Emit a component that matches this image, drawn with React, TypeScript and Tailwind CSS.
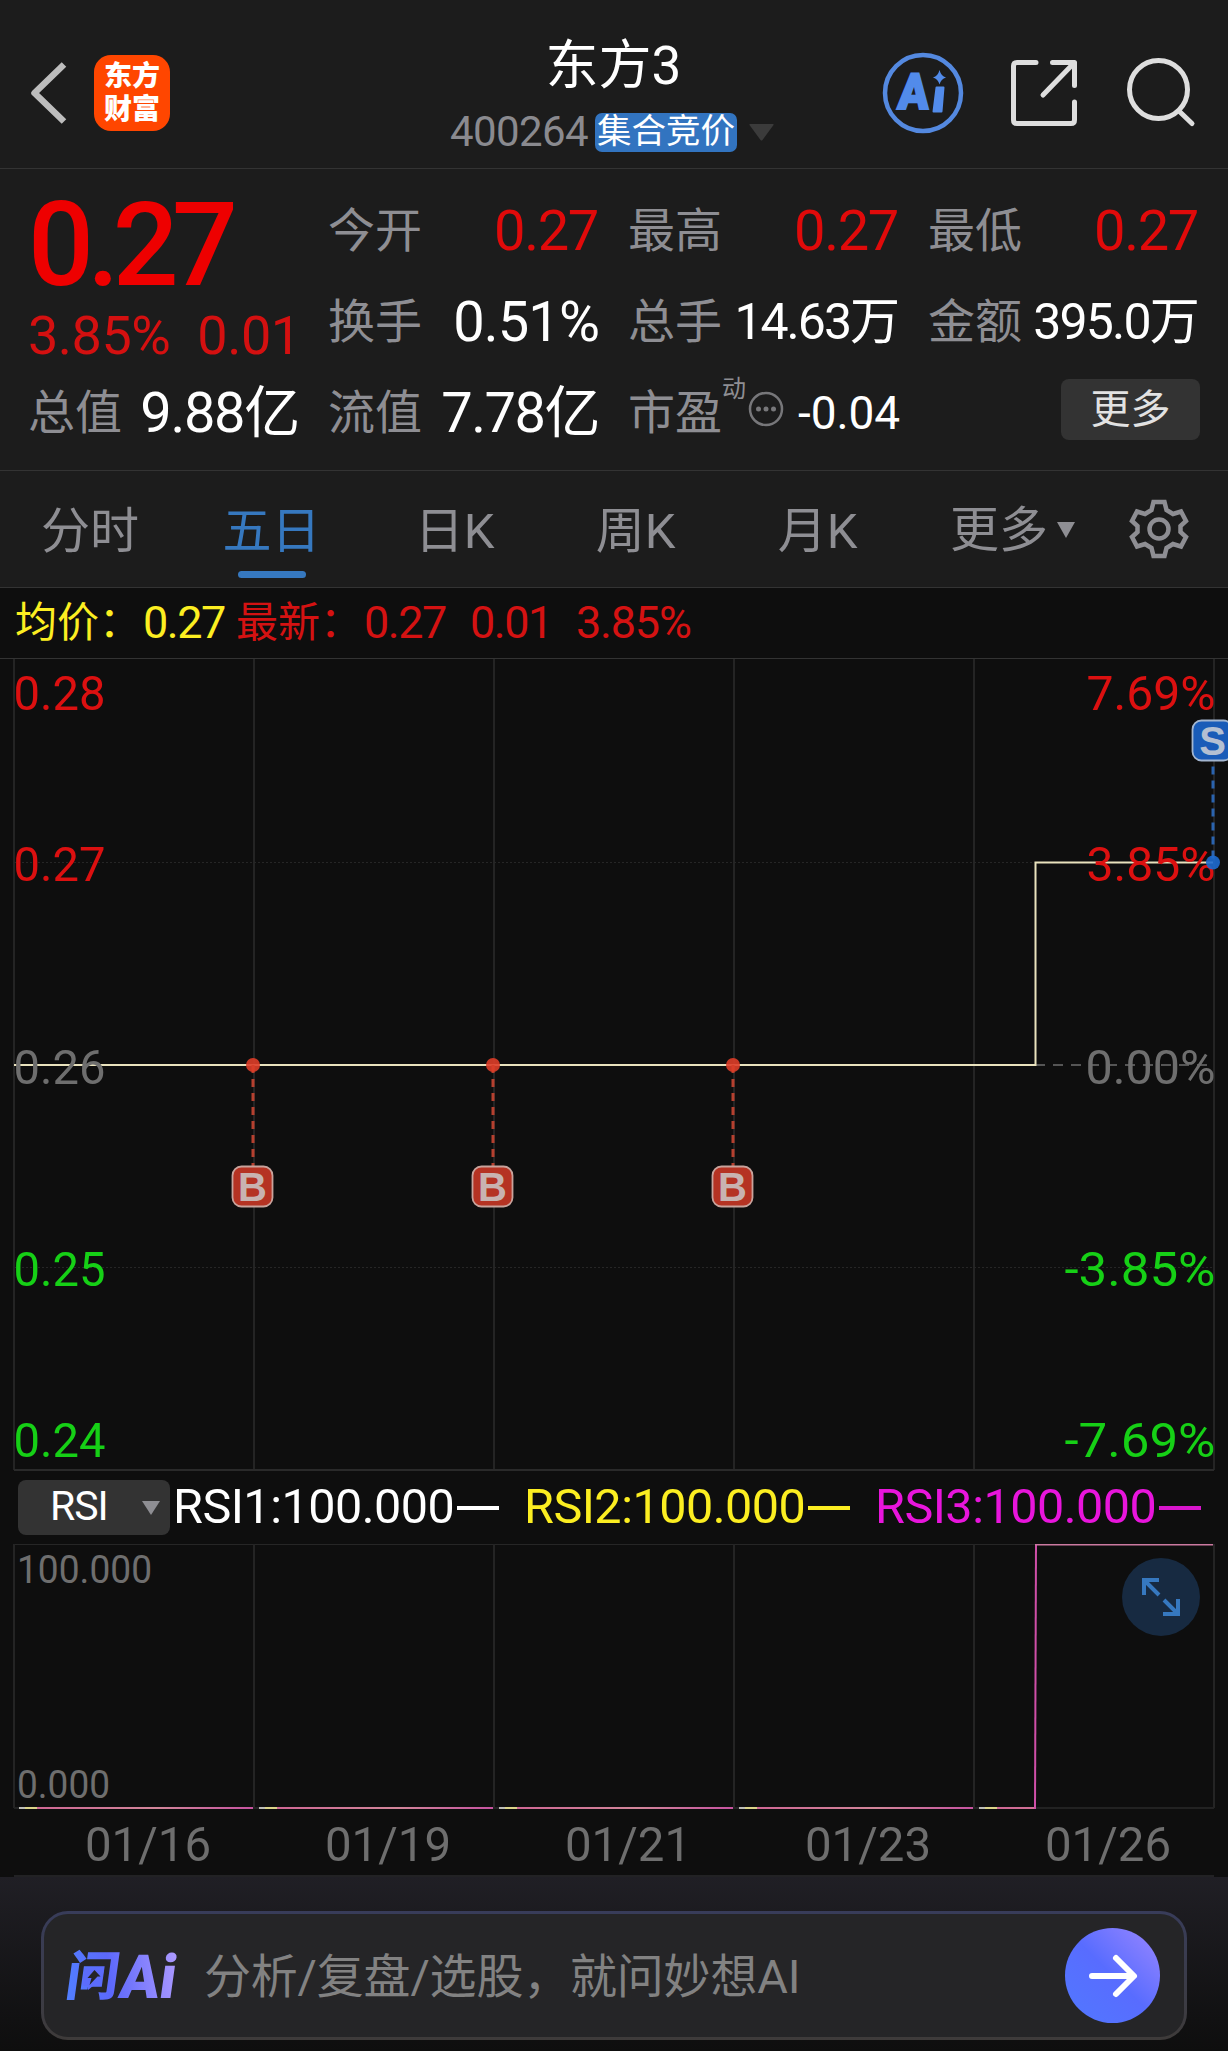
import type { ReactNode } from "react";
import clsx from "clsx";

const FONT = "font-[Roboto,'Noto_Sans_CJK_SC',sans-serif]";

const DATES = ["01/16", "01/19", "01/21", "01/23", "01/26"];
const GRID_X = [14, 254, 494, 734, 974, 1214];

const TABS = [
  { label: "分时", width: "w-[180px]" },
  { label: "五日", width: "w-[183px]", active: true },
  { label: "日K", width: "w-[183px]" },
  { label: "周K", width: "w-[179px]" },
  { label: "月K", width: "w-[185px]" },
];

const PRICE_LABELS = [
  { y: 52, price: "0.28", percent: "7.69%", color: "#dc1010", width: 129 },
  { y: 223, price: "0.27", percent: "3.85%", color: "#dc1010", width: 129 },
  { y: 425.5, price: "0.26", percent: "0.00%", color: "#6e6e6e", width: 130 },
  { y: 628, price: "0.25", percent: "-3.85%", color: "#16d016", width: 151 },
  { y: 799, price: "0.24", percent: "-7.69%", color: "#16d016", width: 151 },
];

const RSI_ITEMS = [
  { label: "RSI1:100.000", color: "text-white", line: "bg-white" },
  { label: "RSI2:100.000", color: "text-[#fcee21]", line: "bg-[#fcee21]" },
  { label: "RSI3:100.000", color: "text-[#e815dc]", line: "bg-[#d815cc]" },
];

export default function App() {
  return (
    <main className={clsx("w-[1228px] h-[2051px] overflow-hidden flex flex-col bg-[#0e0e0e] text-white", FONT)}>
      <Header />
      <QuotePanel />
      <PeriodTabs />
      <LatestBar />
      <PriceChart />
      <RsiBar />
      <RsiChart />
      <AskBar />
    </main>
  );
}

function Header() {
  return (
    <header className="h-[169px] shrink-0 bg-[#1c1c1c] border-b border-[#333] flex items-start justify-between pl-[30px] pr-[31px]">
      <div className="w-[380px] flex items-center pt-[55px]">
        <svg width="38" height="76" viewBox="0 0 38 76" fill="none" stroke="#bdbdbd" strokeWidth="6.500">
          <path d="M34 9.500 4.500 38 34 66.500" strokeLinejoin="round" />
        </svg>
        <div className="ml-[26px] size-[76px] rounded-[17px] bg-[#ff4600] flex flex-col items-center justify-center text-[28px] leading-[33px] font-black">
          <span>东方</span>
          <span>财富</span>
        </div>
      </div>
      <div className="flex flex-col items-center">
        <h1 className="mt-[34px] h-[70px] leading-[65px] text-[53px]">东方3</h1>
        <div className="mt-[7px] mr-[3px] flex items-center">
          <span className="text-[42px] leading-[42px] tracking-[-0.6px] text-[#8a8a8f]">400264</span>
          <span className="ml-[7px] w-[142px] h-[39px] rounded-[7px] bg-[#3274c0] text-[34.5px] leading-[37px] text-center">集合竞价</span>
          <svg className="ml-[12px]" width="25" height="17" viewBox="0 0 25 17" fill="#3b3b3b">
            <path d="M1 0h23q1 0 .5 1L13.500 16q-1 1-2 0L.5 1Q0 0 1 0Z" />
          </svg>
        </div>
      </div>
      <div className="w-[380px] flex items-start justify-end">
        <svg className="mt-[52px]" width="82" height="82" viewBox="0 0 82 82">
          <circle cx="41" cy="41" r="38" fill="none" stroke="#5489e0" strokeWidth="4.500" />
          <g fill="#528bea" fontFamily="Roboto, sans-serif" fontWeight="900" fontSize="50" stroke="#528bea" strokeWidth="2">
            <text x="15" y="57" textLength="31" lengthAdjust="spacingAndGlyphs" transform="skewX(-4) translate(4 0)">A</text>
            <path d="M54.500 35.500h7l-2 24h-8Z" strokeLinejoin="round" />
          </g>
          <path d="M57.500 18q1.500 6 6.500 7.500-5 1.500-6.500 7-1.500-5.500-6.500-7 5-1.500 6.500-7.500Z" fill="#528bea" />
        </svg>
        <svg className="mt-[58px] ml-[45px]" width="70" height="70" viewBox="0 0 70 70" fill="none" stroke="#dedede" strokeWidth="5" strokeLinecap="round" strokeLinejoin="round">
          <path d="M27 4.500H8Q4.500 4.500 4.500 8v54q0 3.500 3.500 3.500h54q3.500 0 3.500-3.500V44" />
          <path d="M43.500 4.500h22v23M65 5 34 37" />
        </svg>
        <svg className="mt-[56px] ml-[45px]" width="73" height="73" viewBox="0 0 73 73" fill="none" stroke="#dedede" strokeWidth="5" strokeLinecap="round">
          <circle cx="34.500" cy="33.500" r="29" />
          <path d="M55 55 68 67.500" />
        </svg>
      </div>
    </header>
  );
}

function Stat({ label, children, size = "text-[56px] tracking-[-1.3px]", red }: { label: string; children: ReactNode; size?: string; red?: boolean }) {
  return (
    <div className="h-[91px] flex items-center justify-between whitespace-nowrap">
      <span className="text-[47px] text-[#8e8e93]">{label}</span>
      <span className={clsx(size, red ? "text-[#e00a0a]" : "text-white")}>{children}</span>
    </div>
  );
}

function QuotePanel() {
  return (
    <section className="h-[302px] shrink-0 bg-[#1c1c1c] border-b border-[#333] grid grid-cols-[270px_270px_270px_270px] gap-x-[30px] pl-[28px] pt-[16px] leading-none">
      <div className="flex flex-col">
        <div className="h-[117px] pt-[3px] text-[116px] leading-[114px] font-medium tracking-[-6.7px] text-[#ee0000]">0.27</div>
        <div className="h-[65px] flex items-center gap-[27px] pt-[3px] text-[54px] leading-[60px] tracking-[-0.5px] text-[#d41010]">
          <span>3.85%</span>
          <span>0.01</span>
        </div>
        <Stat label="总值" size="mr-[-1px] text-[56px] tracking-[-1.3px]">9.88亿</Stat>
      </div>
      <div>
        <Stat label="今开" red>0.27</Stat>
        <Stat label="换手" size="mr-[-1px] text-[56px] tracking-[-0.9px]">0.51%</Stat>
        <Stat label="流值" size="mr-[-1px] text-[56px] tracking-[-1.5px]">7.78亿</Stat>
      </div>
      <div>
        <Stat label="最高" red>0.27</Stat>
        <Stat label="总手" size="text-[50px] tracking-[-2px]">14.63万</Stat>
        <div className="h-[91px] flex items-center whitespace-nowrap">
          <span className="text-[47px] text-[#8e8e93]">市盈</span>
          <span className="mb-[48px] text-[24px] text-[#8e8e93]">动</span>
          <svg className="mb-[8px] ml-[2px]" width="36" height="36" viewBox="0 0 36 36">
            <circle cx="18" cy="18" r="16" fill="none" stroke="#77777a" strokeWidth="2.500" />
            <g fill="#77777a">
              <circle cx="10.500" cy="18" r="2.500" />
              <circle cx="18" cy="18" r="2.500" />
              <circle cx="25.500" cy="18" r="2.500" />
            </g>
          </svg>
          <span className="ml-auto mr-[-2px] text-[46px] tracking-[-0.1px]">-0.04</span>
        </div>
      </div>
      <div>
        <Stat label="最低" red>0.27</Stat>
        <Stat label="金额" size="text-[50px] tracking-[-1.8px]">395.0万</Stat>
        <button className="block ml-auto mt-[12px] mr-[-2px] w-[139px] h-[61px] rounded-[8px] bg-[#333] text-[40px] leading-[57px] text-[#e2e2e2]">更多</button>
      </div>
    </section>
  );
}

function PeriodTabs() {
  return (
    <nav className="h-[117px] shrink-0 bg-[#1c1c1c] border-b border-[#333] flex text-[49px] leading-[60px] text-[#8e8e93]">
      {TABS.map((tab) => (
        <div key={tab.label} className={clsx("flex flex-col items-center pt-[31px]", tab.width, tab.active && "text-[#3678bf]")}>
          <span>{tab.label}</span>
          {tab.active && <span className="mt-[9px] w-[68px] h-[7px] rounded-full bg-[#3678bf]" />}
        </div>
      ))}
      <div className="flex items-center ml-[40px] mt-[4px]">
        <span>更多</span>
        <svg className="ml-[9px] mb-[2px]" width="18" height="16" viewBox="0 0 18 16" fill="#8e8e93">
          <path d="M0 0h18L9 16Z" />
        </svg>
      </div>
      <svg className="ml-[53px] mt-[27px]" width="62" height="62" viewBox="0 0 62 62" fill="none" stroke="#8e8e93" strokeWidth="4.500">
        <path d="M25.500 4h11l2 8 6.500 4 8-2.500 5 9.500-5.500 5v6l5.500 5-5 9.500-8-2.500-6.500 4-2 8h-11l-2-8-6.500-4-8 2.500L4 39l5.500-5v-6L4 23l5-9.500 8 2.500 6.500-4Z" />
        <circle cx="31" cy="31" r="9.500" />
      </svg>
    </nav>
  );
}

function LatestBar() {
  return (
    <div className="h-[70px] shrink-0 flex pl-[15px] text-[45px] leading-[70px] tracking-[-1.5px] whitespace-pre text-[#d41212]">
      <span className="w-[128px] text-[42px] tracking-normal text-[#fcee21]">均价：</span>
      <span className="w-[93px] text-[#fcee21]">0.27</span>
      <span className="w-[128px] text-[42px] tracking-normal">最新：</span>
      <span className="w-[106px]">0.27</span>
      <span className="w-[106px]">0.01</span>
      <span className="tracking-[-1.2px]">3.85%</span>
    </div>
  );
}

function TradeMark({ x, dotY, boxY, kind }: { x: number; dotY: number; boxY: number; kind: "B" | "S" }) {
  const buy = kind === "B";
  const color = buy ? "#dd3d28" : "#1e6cd0";
  return (
    <g>
      <path
        d={buy ? `M${x} ${dotY}V${boxY}` : `M${x} ${dotY - 4}V${boxY + 41}`}
        stroke={buy ? "#b5402f" : "#2a63ae"}
        strokeWidth="3"
        strokeDasharray="8 6"
      />
      <circle cx={x} cy={dotY} r="7" fill={color} fillOpacity="0.9" />
      <rect x={x - 20.500} y={boxY + 0.500} width="40" height="40" rx="9" fill={buy ? "#b53323" : "#1a5cb8"} stroke={buy ? "#c8a39c" : "#a3b6d0"} strokeWidth="1.800" />
      <text x={x - 0.500} y={boxY + 35} textAnchor="middle" fontFamily="Liberation Sans, sans-serif" fontSize="40" fontWeight="700" fill={buy ? "#c8b3b0" : "#b4c0d2"}>
        {kind}
      </text>
    </g>
  );
}

// Five-day price line, viewBox starts at the top border of the plot
function PriceChart() {
  return (
    <svg className="block shrink-0" width="1228" height="813" viewBox="0 0 1228 813" fill="none">
      <path d="M0 .5H1228" stroke="#333" />
      {GRID_X.map((x) => (
        <path key={x} d={`M${x} 1V812`} stroke="#242424" strokeWidth="2" />
      ))}
      <path d="M14 204.500H1214M14 609.500H1214" stroke="#262626" strokeDasharray="2 2" />
      <path d="M14 812H1214" stroke="#2a2a2a" strokeWidth="2" />
      <path d="M1035 407H1214" stroke="#6e6e6e" strokeWidth="1.500" strokeDasharray="10 8" />
      <path d="M14 407H1035.500V204.500H1213" stroke="#e9e2bd" strokeWidth="2" />
      {PRICE_LABELS.map((l) => (
        <g key={l.price} fill={l.color} fontSize="49">
          <text x="13.500" y={l.y} textLength="92" lengthAdjust="spacingAndGlyphs">{l.price}</text>
          <text x={1215.5 - l.width} y={l.y} textLength={l.width} lengthAdjust="spacingAndGlyphs">{l.percent}</text>
        </g>
      ))}
      <TradeMark x={253} dotY={407} boxY={508} kind="B" />
      <TradeMark x={493} dotY={407} boxY={508} kind="B" />
      <TradeMark x={733} dotY={407} boxY={508} kind="B" />
      <TradeMark x={1213} dotY={204.500} boxY={62} kind="S" />
    </svg>
  );
}

function RsiBar() {
  return (
    <div className="h-[73px] shrink-0 flex items-center pl-[18px] whitespace-nowrap">
      <button className="w-[152px] h-[55px] rounded-[8px] bg-[#333] flex items-center pl-[32px] text-[41px] leading-[55px] tracking-[-1px]">
        <span className="mt-[-2px]">RSI</span>
        <svg className="ml-[34px]" width="18" height="14" viewBox="0 0 18 14" fill="#8e8e93">
          <path d="M0 0h18L9 14Z" />
        </svg>
      </button>
      {RSI_ITEMS.map((item) => (
        <div key={item.label} className={clsx("w-[351px] flex items-center pl-[3px]", item.color)}>
          <span className="mt-[-2px] w-[284px] text-[48.5px] leading-[70px] tracking-[-0.5px]">{item.label}</span>
          <span className={clsx("w-[42px] h-[4px]", item.line)} />
        </div>
      ))}
    </div>
  );
}

function RsiChart() {
  return (
    <div className="relative h-[333px] shrink-0">
      <svg className="block" width="1228" height="333" viewBox="0 0 1228 333" fill="none">
        <defs>
          <linearGradient id="rsi" gradientUnits="userSpaceOnUse" x1="37" y1="0" x2="277" y2="0" spreadMethod="repeat">
            <stop offset="0" stopColor="#cf6794" />
            <stop offset="0.500" stopColor="#d2869a" />
            <stop offset="0.900" stopColor="#c653a0" />
          </linearGradient>
        </defs>
        <path d="M14 .5H1214" stroke="#262626" />
        {GRID_X.map((x) => (
          <path key={x} d={`M${x} 0V264`} stroke="#242424" strokeWidth="2" />
        ))}
        <path d="M14 264H1214" stroke="#222" strokeWidth="2" />
        {GRID_X.slice(0, 5).map((x) => (
          <g key={x} strokeWidth="2">
            <path d={`M${x + 5} 264h6`} stroke="#bcbcb8" />
            <path d={`M${x + 11} 264h12`} stroke="#dcd48a" />
            <path d={`M${x + 23} 264H${x === 974 ? 1035 : x + 239}`} stroke="url(#rsi)" />
          </g>
        ))}
        <path d="M1035 265 1036 0" stroke="#cf4fa8" strokeWidth="2" />
        <path d="M1035 0H1213" stroke="#cb79a0" strokeWidth="3" />
        <g fill="#6e6e6e">
          <text x="17" y="39" fontSize="39" textLength="135" lengthAdjust="spacingAndGlyphs">100.000</text>
          <text x="17" y="254" fontSize="39" textLength="93" lengthAdjust="spacingAndGlyphs">0.000</text>
          {DATES.map((date, i) => (
            <text key={date} x={85 + i * 240} y="317" fontSize="49" textLength="126" lengthAdjust="spacingAndGlyphs">{date}</text>
          ))}
        </g>
        <path d="M14 332H1214" stroke="#222224" strokeWidth="2" />
      </svg>
      <button className="absolute left-[1122px] top-[14px] size-[78px] rounded-full bg-[#172a41]">
        <svg width="78" height="78" viewBox="0 0 78 78" fill="none" stroke="#3678bf" strokeWidth="4">
          <path d="M37 22H22v15M22 22l15 15M41 56h15V41M56 56 42 42" />
        </svg>
      </button>
    </div>
  );
}

function AskBar() {
  return (
    <footer className="h-[174px] shrink-0 bg-linear-to-b from-[#201f25] to-[#0e0e0e] pt-[34px] pl-[41px]">
      <div className="w-[1146px] h-[129px] rounded-[27px] bg-linear-to-b from-[#383c5a] to-[#3e3b3a] p-[3px]">
        <div className="h-full rounded-[24px] bg-[#252527] flex items-center pl-[19px] pr-[24px]">
          <svg width="118" height="90" viewBox="0 0 118 90">
            <defs>
              <linearGradient id="ask" gradientUnits="userSpaceOnUse" x1="8" y1="60" x2="122" y2="30">
                <stop offset="0" stopColor="#5080ff" />
                <stop offset="0.400" stopColor="#5c68fb" />
                <stop offset="1" stopColor="#b09cff" />
              </linearGradient>
            </defs>
            <g fill="url(#ask)" transform="skewX(-8)">
              <text x="10" y="64" fontFamily="Noto Sans CJK SC, sans-serif" fontSize="53" fontWeight="900" textLength="53" lengthAdjust="spacingAndGlyphs">问</text>
              <text x="64" y="67" fontFamily="Roboto, sans-serif" fontSize="61" fontWeight="900" textLength="56" lengthAdjust="spacingAndGlyphs">Ai</text>
            </g>
            {/* speech bubble with the spark inside the first character */}
            <path d="M23 37h15q3 0 2.500 3l-2 12q-.5 3-3.500 3h-5l-5 4v-4h-3q-3 0-2.500-3l1.500-12q.5-3 2-3Z" fill="#5c6cfb" />
            <path d="m31.500 39-7 8h4l-2 7 8-8.500h3Z" fill="#252527" />
          </svg>
          <span className="ml-[23px] mt-[2px] text-[47px] leading-[60px] tracking-[-0.2px] text-[#828282] whitespace-nowrap">分析/复盘/选股，就问妙想AI</span>
          <button className="ml-auto size-[95px] rounded-full bg-linear-to-tr from-[#5178ff] via-[#586cff] to-[#9a86ff] flex items-center justify-center">
            <svg width="52" height="48" viewBox="0 0 52 48" fill="none" stroke="#fff" strokeWidth="6" strokeLinecap="round" strokeLinejoin="round">
              <path d="M5 24h41M29 6l18 18-18 18" />
            </svg>
          </button>
        </div>
      </div>
    </footer>
  );
}
